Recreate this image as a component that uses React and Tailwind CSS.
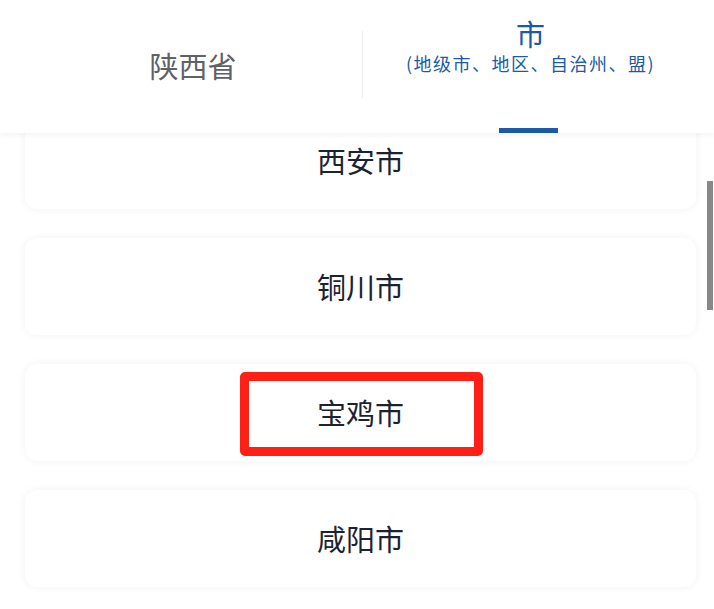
export default function App() {
  const cities = ["西安市", "铜川市", "宝鸡市", "咸阳市"];
  const font = { fontFamily: '"Noto Sans CJK SC", "Noto Sans", sans-serif' };
  return (
    <div className="relative h-[609px] w-[714px] overflow-hidden bg-white" style={font}>
      <div className="relative z-10 flex h-[133px] bg-white shadow-[0_2px_6px_rgba(0,0,0,0.05)]">
        <div className="flex w-[362px] items-center justify-center pb-[3px] pl-[24px]">
          <span className="text-[29px] leading-none text-[#5f6068]">陕西省</span>
        </div>
        <div className="mt-[31px] h-[67px] w-px bg-[#ececec]" />
        <div className="relative flex flex-1 flex-col items-center pr-[16px] pt-[16px]">
          <span className="text-[29px] leading-[34px] text-[#1a5aa8]">市</span>
          <span className="mt-[1px] text-[18px] leading-[24px] tracking-[1.5px] text-[#1a5aa8]">(地级市、地区、自治州、盟)</span>
          <div className="absolute bottom-0 left-[136px] h-[5px] w-[59px] bg-[#1a5aa8]" />
        </div>
      </div>
      <div className="mt-[-21px] flex flex-col gap-[29px] pl-[25px] pr-[18px]">
        {cities.map((c, i) => (
          <div
            key={c}
            className="relative flex h-[97px] items-center justify-center rounded-[12px] bg-white shadow-[0_0_8px_rgba(0,0,0,0.06)]"
          >
            <span className="text-[29px] leading-none text-[#1b2332]">{c}</span>
            {i === 2 && (
              <div className="absolute left-[215px] top-[8px] h-[84px] w-[243px] rounded-[5px] border-[9px] border-[#ff1f14]" />
            )}
          </div>
        ))}
      </div>
      <div className="absolute right-[1px] top-[181px] h-[129px] w-[6px] bg-[#888888]" />
    </div>
  );
}
